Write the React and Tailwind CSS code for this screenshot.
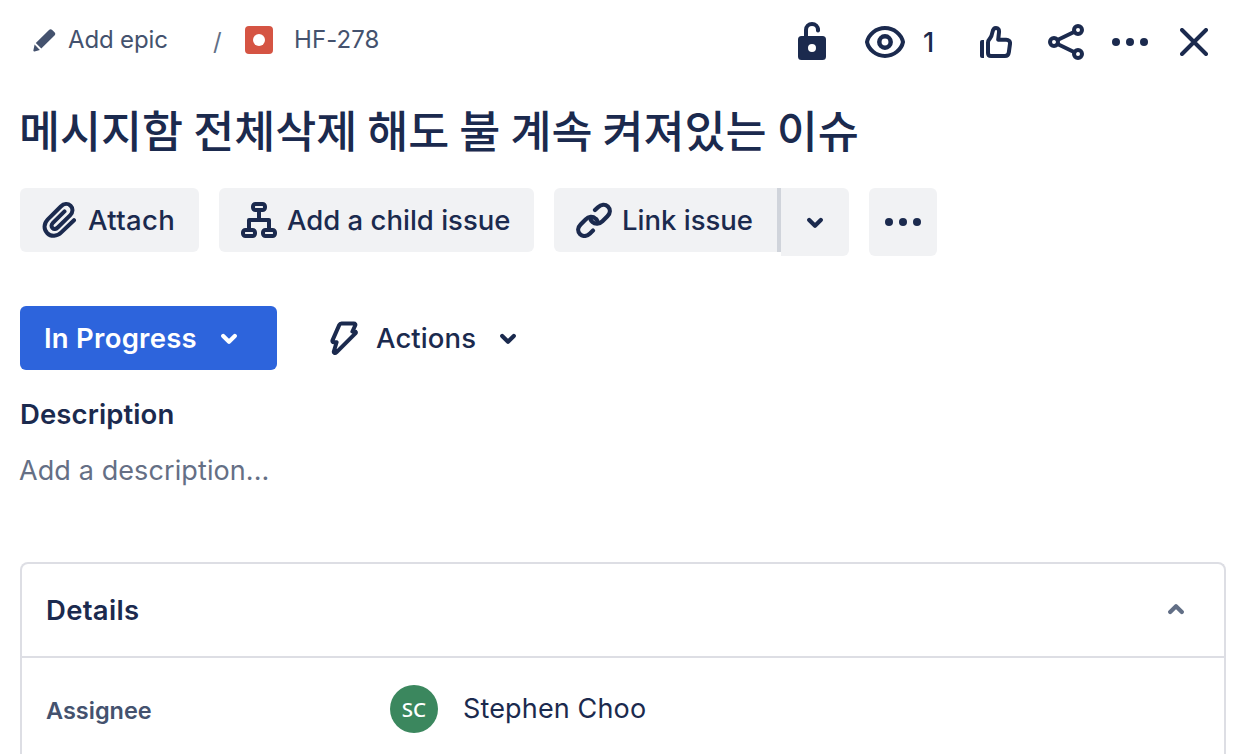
import React from "react";

const stroke = {
  fill: "none",
  stroke: "currentColor",
  strokeWidth: 4,
  strokeLinecap: "round",
  strokeLinejoin: "round",
};

function PencilIcon() {
  return (
    <svg width="24" height="24" viewBox="0 0 24 24" fill="currentColor" className="block">
      <path d="M17 1.900c1-.9 2.200-.9 3.200 0l2.300 2.300c1 1 1 2.200 0 3.200L9.300 20.600 3.800 15z" />
      <path d="M2.600 16.600 7.900 22l-5.400 1.400c-.8.2-1.300-.3-1.100-1.100z" />
    </svg>
  );
}

function UnlockIcon() {
  return (
    <svg width="28" height="40" viewBox="0 0 28 40" className="block">
      <path
        fill="currentColor"
        fillRule="evenodd"
        d="M3.500 16h21A3.500 3.500 0 0 1 28 19.500v17a3.500 3.500 0 0 1-3.500 3.500h-21A3.500 3.500 0 0 1 0 36.500v-17A3.500 3.500 0 0 1 3.500 16zM14 24a4 4 0 1 0 0 8 4 4 0 0 0 0-8z"
      />
      <path {...stroke} strokeLinecap="butt" d="M8 17v-7a6 6 0 0 1 12 0" />
      <path {...stroke} d="M20 9.500v1" />
    </svg>
  );
}

function EyeIcon() {
  return (
    <svg width="40" height="32" viewBox="0 0 40 32" className="block">
      <path {...stroke} d="M2 16C3.500 8.500 11 2 20 2s16.500 6.500 18 14c-1.500 7.500-9 14-18 14S3.500 23.500 2 16z" />
      <circle {...stroke} strokeWidth="4.500" cx="20" cy="16" r="5.700" />
    </svg>
  );
}

function LikeIcon() {
  return (
    <svg width="32" height="32" viewBox="0 0 32 32" className="block">
      <path fill="currentColor" d="M0 16a2 2 0 0 1 2-2h2v18H2a2 2 0 0 1-2-2z" />
      <path
        {...stroke}
        d="M8 16.500c0-1.500.6-2.500 1.800-3.800 1.500-1.800 2.200-3.700 2.700-6.700C13 3 14 2 16 2c2.200 0 3.300 1.800 3 4.200l-.8 7.500h8c2.500 0 4.200 1.800 3.800 4.200l-1.200 8.600c-.3 2.300-1.700 3.500-3.900 3.500H11c-1.900 0-3-1.200-3-3z"
      />
    </svg>
  );
}

function ShareIcon() {
  return (
    <svg width="36" height="36" viewBox="0 0 36 36" className="block">
      <g {...stroke}>
        <path d="M9.500 16 26.500 7.800M9.500 20l17 8.200" />
        <circle cx="6" cy="18" r="4" />
        <circle cx="30" cy="6" r="4" />
        <circle cx="30" cy="30" r="4" />
      </g>
    </svg>
  );
}

function DotsIcon() {
  return (
    <svg width="36" height="8" viewBox="0 0 36 8" fill="currentColor" className="block">
      <circle cx="4" cy="4" r="4" />
      <circle cx="18" cy="4" r="4" />
      <circle cx="32" cy="4" r="4" />
    </svg>
  );
}

function CloseIcon() {
  return (
    <svg width="28" height="28" viewBox="0 0 28 28" className="block">
      <path {...stroke} d="M2 2l24 24M26 2 2 26" />
    </svg>
  );
}

function AttachIcon() {
  return (
    <svg width="36" height="36" viewBox="0 0 36 36" className="block">
      <path
        {...stroke}
        d="M32 18.200 19.300 30.400c-4.300 4.300-10.200 4.500-14 .8s-3.700-9.600.5-13.800L18.800 4.500c3-3 7.200-3.200 9.800-.7s2.500 6.600-.5 9.600L15.700 25.500c-1.700 1.700-3.800 1.900-5.200.5s-1.300-3.500.4-5.200L22.500 9.400"
      />
    </svg>
  );
}

function TreeIcon() {
  return (
    <svg width="36" height="36" viewBox="0 0 36 36" className="block">
      <g {...stroke} strokeLinecap="butt">
        <rect x="12" y="2" width="12" height="6" rx="2.400" />
        <rect x="2" y="28" width="12" height="6" rx="2.400" />
        <rect x="22" y="28" width="12" height="6" rx="2.400" />
        <path d="M18 8v10M8 28V18h20v10" />
      </g>
    </svg>
  );
}

function LinkIcon() {
  return (
    <svg width="36" height="36" viewBox="0 0 36 36" className="block">
      <g {...stroke} strokeWidth="4.200" transform="translate(0 .6)">
        <path d="M19 7.500 22 4.600c3-3 7.200-3.300 9.900-.7 2.700 2.700 2.500 6.800-.5 9.800l-5 5c-3 3-7.200 3.300-10 .7-.8-.7-1.300-1.400-1.700-2.200" />
        <path d="M17 28 14 30.900c-3 3-7.200 3.300-9.900.7-2.700-2.700-2.500-6.800.5-9.800l5-5c3-3 7.200-3.300 10-.7.8.7 1.300 1.400 1.700 2.200" />
      </g>
    </svg>
  );
}

function BoltIcon() {
  return (
    <svg width="28" height="36" viewBox="0 0 28 36" className="block">
      <path
        {...stroke}
        d="M11.500 3.500h12.300c1.300 0 1.900.9 1.400 2l-2.800 6h2.300c1.300 0 1.500 1 .7 1.900L6.400 32.400c-1.400 1.300-3 .5-2.500-1.200l2.700-9H3.900c-1.300 0-1.800-.9-1.300-2L9.300 4.900c.5-1 1.100-1.400 2.200-1.400z"
      />
    </svg>
  );
}

function Chevron({ up = false }) {
  return (
    <svg width="16" height="11" viewBox="0 0 16 11" className="block">
      <path {...stroke} strokeWidth="4.200" d={up ? "M2.200 8l5.800-5.700L13.800 8" : "M2.200 3l5.800 5.700L13.800 3"} />
    </svg>
  );
}

export default function App() {
  return (
    <main className="h-[754px] w-[1238px] overflow-hidden bg-white pl-5 font-['Inter','Noto_Sans_CJK_KR',sans-serif] whitespace-nowrap text-[#1b2a4e]">
      <header className="flex h-[84px] items-center justify-between pr-[30px]">
        <nav className="flex items-center pb-1 text-2xl text-[#44526e]">
          <div className="flex w-[193px] items-center pl-3">
            <PencilIcon />
            <span className="ml-3 tracking-[-0.150px]">Add epic</span>
          </div>
          <span className="w-8 pt-1 text-[#626f86]">/</span>
          <span className="flex size-7 items-center justify-center rounded bg-[#d55443]">
            <span className="size-3 rounded-full bg-white" />
          </span>
          <span className="ml-[21px] tracking-[0.1px]">HF-278</span>
        </nav>
        <div className="flex items-center">
          <span className="w-[67px] pb-1">
            <UnlockIcon />
          </span>
          <EyeIcon />
          <span className="ml-[18px] w-[57px] pt-0.5 text-[27px] font-medium">1</span>
          <span className="w-[68px]">
            <LikeIcon />
          </span>
          <span className="w-16">
            <ShareIcon />
          </span>
          <span className="w-[68px]">
            <DotsIcon />
          </span>
          <CloseIcon />
        </div>
      </header>

      <h1 className="-ml-px h-[104px] pt-3 font-['Noto_Sans_CJK_KR',sans-serif] text-[44.600px] leading-[66px] font-medium">
        메시지함 전체삭제 해도 불 계속 켜져있는 이슈
      </h1>

      <div className="flex h-[118px] items-start text-[27.500px] font-medium">
        <button className="flex h-16 w-[179px] items-center rounded-md bg-[#f1f2f4] pl-[22px]">
          <AttachIcon />
          <span className="ml-[10px] pt-0.5 tracking-[0.350px]">Attach</span>
        </button>
        <button className="ml-5 flex h-16 w-[315px] items-center rounded-md bg-[#f1f2f4] pl-[22px]">
          <TreeIcon />
          <span className="ml-[10px] pt-0.5">Add a child issue</span>
        </button>
        <button className="ml-5 flex h-16 w-[227px] items-center rounded-l-md border-r-4 border-[#d0d4db] bg-[#f1f2f4] pl-[22px]">
          <LinkIcon />
          <span className="ml-[10px] pt-0.5">Link issue</span>
        </button>
        <button className="flex h-[68px] w-[68px] items-center justify-center rounded-r-md bg-[#f1f2f4]">
          <Chevron />
        </button>
        <button className="ml-5 flex h-[68px] w-[68px] items-center justify-center rounded-md bg-[#f1f2f4]">
          <DotsIcon />
        </button>
      </div>

      <div className="flex h-16 items-center text-[27.500px] font-medium">
        <button className="flex h-16 w-[257px] items-center rounded-md bg-[#2d64dc] pl-6 font-semibold text-white">
          <span className="w-[177px] pt-0.5 text-left tracking-[0.250px]">In Progress</span>
          <Chevron />
        </button>
        <button className="ml-[53px] flex items-center">
          <BoltIcon />
          <span className="ml-[18px] w-[124px] pt-0.5 text-left tracking-[0.100px]">Actions</span>
          <Chevron />
        </button>
      </div>

      <section className="h-[192px]">
        <h2 className="pt-6 text-[27.500px] leading-10 font-semibold tracking-[0.100px]">Description</h2>
        <p className="-ml-px pt-[17px] text-[27px] leading-10 tracking-[0.100px] text-[#656f85]">Add a description...</p>
      </section>

      <section className="h-[220px] w-[1206px] rounded-t-lg border-2 border-b-0 border-[#dddee4]">
        <div className="flex h-[94px] items-center justify-between border-b-2 border-[#dddee4] pr-10 pl-6">
          <h2 className="pt-0.5 text-[27.500px] font-semibold tracking-[0.300px]">Details</h2>
          <span className="pb-px text-[#626f86]">
            <Chevron up />
          </span>
        </div>
        <div className="flex h-[102px] items-center pl-6">
          <span className="w-[344px] pt-1 text-[23.500px] font-semibold text-[#44526e]">Assignee</span>
          <span className="flex size-12 items-center justify-center rounded-full bg-[#3b875e] font-['Noto_Sans',sans-serif] text-[20.500px] font-medium text-white">
            SC
          </span>
          <span className="ml-[25px] text-[27px] tracking-[0.150px]">Stephen Choo</span>
        </div>
      </section>
    </main>
  );
}
